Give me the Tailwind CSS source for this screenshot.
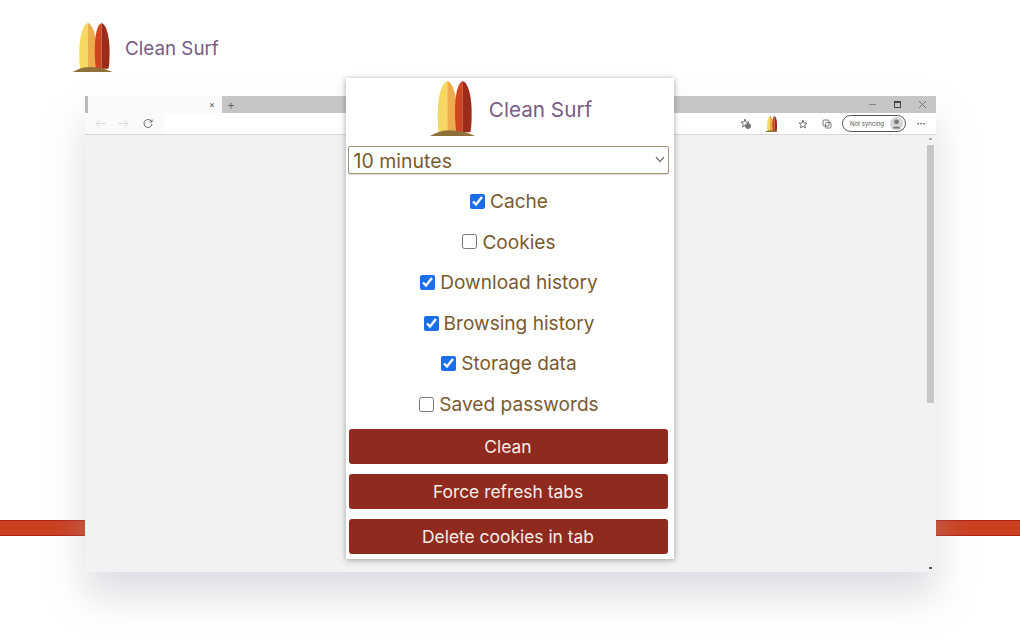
<!DOCTYPE html>
<html lang="en">
<head>
  <meta charset="UTF-8">
  <title>Clean Surf</title>
  <script src="https://cdn.jsdelivr.net/npm/@tailwindcss/browser@4"></script>
</head>
<body class="bg-white font-['Inter','Liberation_Sans',sans-serif]">
  <svg class="hidden">
    <symbol id="boards" viewBox="0 0 135 165">
      <path d="M52 0C36 4 23 45 23 100C23 125 24 142 26 154H52Z" fill="#f5d860"/>
      <path d="M52 0C68 4 82 45 82 100C82 125 81 142 79 154H52Z" fill="#eeac4c"/>
      <path d="M98 0C84 4 75 40 75 90C75 120 77 142 79 154H98Z" fill="#d0451f"/>
      <path d="M98 0C114 4 125 45 125 95C125 122 124 142 121 154H98Z" fill="#9c2c1a"/>
      <path d="M0 165C16 158 30 148 60 148C95 148 118 158 135 165Z" fill="#8f7038"/>
    </symbol>
  </svg>

  <div class="relative w-[1020px] h-[638px] overflow-hidden">
    <!-- red stripe behind the window -->
    <div class="absolute left-0 right-0 top-[520px] h-4 bg-[#cb3f20] border-y border-[#a82414]"></div>

    <!-- page logo -->
    <div class="flex items-start gap-3 pl-[72px] pt-[23px] h-[96px]">
      <svg class="w-[41px] h-[49px]"><use href="#boards"/></svg>
      <span class="text-[18.8px] leading-[49px] text-[#7a5c85] mt-[1px]">Clean Surf</span>
    </div>

    <!-- browser window -->
    <div class="relative ml-[85px] w-[851px] h-[476px] bg-[#f2f2f3] flex flex-col shadow-[0_24px_36px_rgba(170,172,185,0.4)]">
      <div class="flex h-[17px] bg-[#c6c6c6]">
        <div class="w-[137px] bg-[#fafafa] border-l-[3px] border-[#bbbbbb] flex items-center justify-end pr-[7px] text-[9px] leading-none text-[#555]">×</div>
        <div class="w-[18px] flex items-center justify-center text-[12px] leading-none text-[#666]">+</div>
        <div class="flex-1 flex items-center justify-end gap-[18px] pr-[10px]">
          <div class="w-[7px] h-px bg-[#888]"></div>
          <div class="w-[7px] h-[7px] border border-[#444] border-t-2"></div>
          <svg class="w-[7px] h-[7px]" viewBox="0 0 7 7" stroke="#777" fill="none"><path d="M0 0L7 7M7 0L0 7"/></svg>
        </div>
      </div>
      <div class="flex items-center h-[22px] bg-[#fafafa] border-b border-[#d8d8d8]">
        <div class="flex items-center w-[79px] pl-[10px] gap-[12px]">
          <svg class="w-[11px] h-[9px]" viewBox="0 0 11 9" stroke="#dcdcdc" fill="none"><path d="M11 4.5H1M5 .5L1 4.5L5 8.5"/></svg>
          <svg class="w-[11px] h-[9px]" viewBox="0 0 11 9" stroke="#dcdcdc" fill="none"><path d="M0 4.5H10M6 .5L10 4.5L6 8.5"/></svg>
          <svg class="w-[10px] h-[10px] ml-[2px]" viewBox="0 0 10 10" stroke="#666" fill="none"><path d="M8.5 2.5A4 4 0 1 0 9 5M9 .5V3H6.5"/></svg>
        </div>
        <div class="flex-1 h-full bg-white flex items-center justify-end">
          <svg class="w-[11px] h-[11px] mr-[14px]" viewBox="0 0 11 11" stroke="#777" fill="none"><path d="M5 1L6 4L9 4L6.8 6L7.5 9L5 7.4L2.5 9L3.2 6L1 4L4 4Z"/><circle cx="8" cy="8" r="2.5" fill="#777"/></svg>
          <svg class="w-[13px] h-[16px] mr-[20px]"><use href="#boards"/></svg>
          <svg class="w-[10px] h-[10px] mr-[14px]" viewBox="0 0 10 10" stroke="#777" fill="none"><path d="M5 1L6 4L9 4L6.8 6L7.5 9L5 7.4L2.5 9L3.2 6L1 4L4 4Z"/></svg>
          <svg class="w-[10px] h-[10px] mr-[10px]" viewBox="0 0 10 10" stroke="#777" fill="none"><rect x="1" y="1" width="6" height="6" rx="1"/><rect x="3.5" y="3.5" width="5.5" height="5.5" rx="1"/></svg>
          <div class="flex items-center justify-between w-[64px] h-[17px] rounded-full border border-[#555] pl-[7px] pr-[2px] text-[6px] text-[#555]">
            Not syncing
            <svg class="w-[13px] h-[13px]" viewBox="0 0 13 13"><circle cx="6.5" cy="6.5" r="6.5" fill="#d4d4d4"/><circle cx="6.5" cy="4.8" r="2.4" fill="#777"/><path d="M2.5 11.5C3 8.8 10 8.8 10.5 11.5Z" fill="#777"/></svg>
          </div>
          <div class="w-[30px] text-center text-[9px] leading-none font-bold text-[#444]">···</div>
        </div>
      </div>
      <div class="flex-1 flex justify-end pr-[1px]">
        <div class="w-[9px] pt-[3px] pb-[3px] flex flex-col items-center">
          <div class="w-[3px] h-[2px] bg-[#aaa] mb-[5px]"></div>
          <div class="w-[7px] h-[258px] bg-[#c6c6c6]"></div>
          <div class="w-[3px] h-[2px] bg-[#555] mt-auto"></div>
        </div>
      </div>
    </div>

    <!-- extension popup -->
    <div class="absolute left-[346px] top-[78px] w-[328px] h-[481px] bg-white shadow-[0_1px_6px_rgba(90,90,90,0.55)] flex flex-col items-center pl-[2px] pr-[4px]">
      <div class="flex items-start gap-[14px] h-[68px] pt-[3px] pl-[4px]">
        <svg class="w-[45px] h-[55px]"><use href="#boards"/></svg>
        <span class="text-[20.7px] leading-[55px] text-[#7a5c85] mt-[1px]">Clean Surf</span>
      </div>
      <div class="relative w-[321px] h-[28px] mr-[2px]">
        <select class="appearance-none w-full h-full border border-[#a89478] rounded-[2px] pl-[5px] text-[19.5px] text-[#7a5a2e] bg-white shadow-[0_1px_1px_rgba(0,0,0,0.15)]">
          <option>10 minutes</option>
        </select>
        <svg class="absolute right-[4px] top-[10px] w-[10px] h-[7px]" viewBox="0 0 10 7" stroke="#777" stroke-width="1.3" fill="none"><path d="M1 1L5 5.5L9 1"/></svg>
      </div>
      <div class="flex flex-col items-center w-full mt-[7px] text-[19.1px] text-[#7a5a2e] accent-[#1a6fe8]">
        <label class="h-[40.6px] flex items-center gap-[5px]"><input type="checkbox" checked class="w-[15px] h-[15px]">Cache</label>
        <label class="h-[40.6px] flex items-center gap-[5px]"><input type="checkbox" class="w-[15px] h-[15px]">Cookies</label>
        <label class="h-[40.6px] flex items-center gap-[5px]"><input type="checkbox" checked class="w-[15px] h-[15px]">Download history</label>
        <label class="h-[40.6px] flex items-center gap-[5px]"><input type="checkbox" checked class="w-[15px] h-[15px]">Browsing history</label>
        <label class="h-[40.6px] flex items-center gap-[5px]"><input type="checkbox" checked class="w-[15px] h-[15px]">Storage data</label>
        <label class="h-[40.6px] flex items-center gap-[5px]"><input type="checkbox" class="w-[15px] h-[15px]">Saved passwords</label>
      </div>
      <div class="flex flex-col gap-[10px] w-[319px] mr-[2px] mt-[4.4px] text-[17.4px] text-[#f5ece8]">
        <button class="h-[35px] pt-[2px] rounded-[3px] bg-[#902a1f]">Clean</button>
        <button class="h-[35px] pt-[2px] rounded-[3px] bg-[#902a1f]">Force refresh tabs</button>
        <button class="h-[35px] pt-[2px] rounded-[3px] bg-[#902a1f]">Delete cookies in tab</button>
      </div>
    </div>
  </div>
</body>
</html>
